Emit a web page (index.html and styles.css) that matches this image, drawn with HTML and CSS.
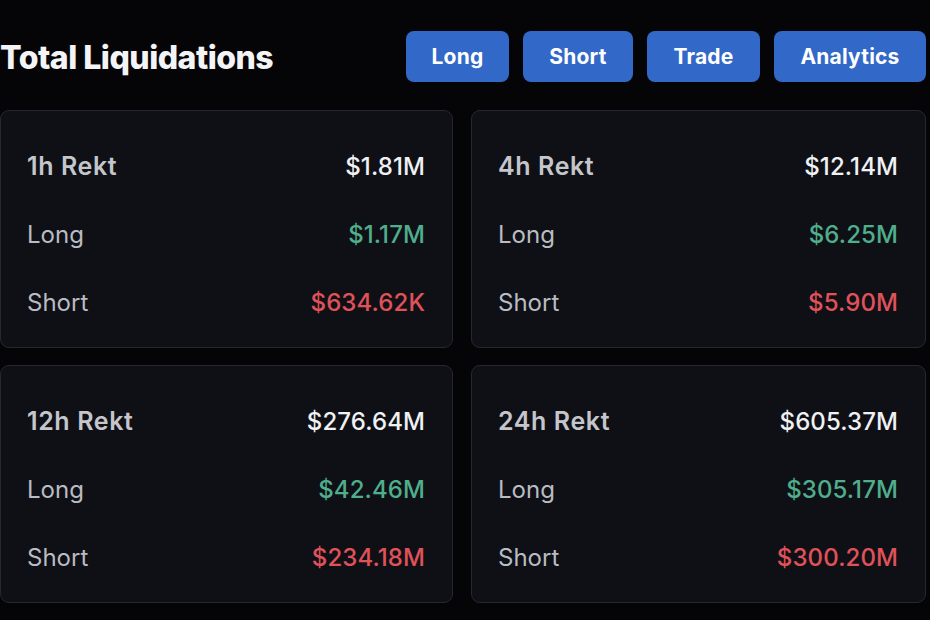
FILE: index.html
```html
<!DOCTYPE html>
<html>
<head>
<meta charset="utf-8">
<link rel="stylesheet" href="styles.css">
</head>
<body>
<div class="page">
  <header class="header">
    <h1 class="title">Total Liquidations</h1>
    <nav class="tabs">
      <button class="tab">Long</button>
      <button class="tab">Short</button>
      <button class="tab">Trade</button>
      <button class="tab tab-wide">Analytics</button>
    </nav>
  </header>
  <main class="grid">
    <section class="card">
      <div class="row head"><span class="label">1h Rekt</span><span class="val">$1.81M</span></div>
      <div class="row"><span class="label">Long</span><span class="val green">$1.17M</span></div>
      <div class="row"><span class="label">Short</span><span class="val red">$634.62K</span></div>
    </section>
    <section class="card">
      <div class="row head"><span class="label">4h Rekt</span><span class="val">$12.14M</span></div>
      <div class="row"><span class="label">Long</span><span class="val green">$6.25M</span></div>
      <div class="row"><span class="label">Short</span><span class="val red">$5.90M</span></div>
    </section>
    <section class="card">
      <div class="row head"><span class="label">12h Rekt</span><span class="val">$276.64M</span></div>
      <div class="row"><span class="label">Long</span><span class="val green">$42.46M</span></div>
      <div class="row"><span class="label">Short</span><span class="val red">$234.18M</span></div>
    </section>
    <section class="card">
      <div class="row head"><span class="label">24h Rekt</span><span class="val">$605.37M</span></div>
      <div class="row"><span class="label">Long</span><span class="val green">$305.17M</span></div>
      <div class="row"><span class="label">Short</span><span class="val red">$300.20M</span></div>
    </section>
  </main>
</div>
</body>
</html>
```
FILE: styles.css
```css
* { box-sizing: border-box; }
html, body {
  margin: 0;
  padding: 0;
  background: #050508;
  width: 930px;
  height: 620px;
  overflow: hidden;
}
body {
  font-family: Inter, "Noto Sans", sans-serif;
  color: #f2f3f5;
}
.page {
  width: 926px;
  padding-top: 31px;
}
.header {
  display: flex;
  align-items: center;
  justify-content: space-between;
  height: 51px;
}
.title {
  margin: 0;
  font-size: 32px;
  font-weight: 800;
  letter-spacing: -0.5px;
  color: #f4f4f6;
  margin-top: 2px;
}
.tabs {
  display: flex;
  gap: 14px;
}
.tab {
  height: 51px;
  width: 103px;
  border: none;
  border-radius: 8px;
  background: #3268c8;
  color: #ffffff;
  font-family: Inter, "Noto Sans", sans-serif;
  font-size: 21px;
  font-weight: 700;
  letter-spacing: 0.2px;
  padding: 0;
}
.tab:nth-child(2) { width: 110px; }
.tab:nth-child(3) { width: 113px; }
.tab-wide { width: 152px; }
.grid {
  display: grid;
  grid-template-columns: 453px 455px;
  column-gap: 18px;
  row-gap: 17px;
  margin-top: 28px;
}
.card {
  background: #0f1016;
  border: 1px solid #26282f;
  border-radius: 9px;
  padding: 21px 27px 12px 26px;
  height: 238px;
}
.row {
  display: flex;
  justify-content: space-between;
  align-items: center;
  height: 68px;
  font-size: 24px;
}
.label {
  color: #b9bcc3;
  font-weight: 400;
}
.head .label {
  color: #c4c6cc;
  font-size: 25px;
  font-weight: 600;
  letter-spacing: 0.6px;
}
.val {
  color: #f0f1f3;
  font-weight: 500;
  letter-spacing: 0.1px;
}
.green { color: #4fae8c; }
.red { color: #e0525a; }
```
